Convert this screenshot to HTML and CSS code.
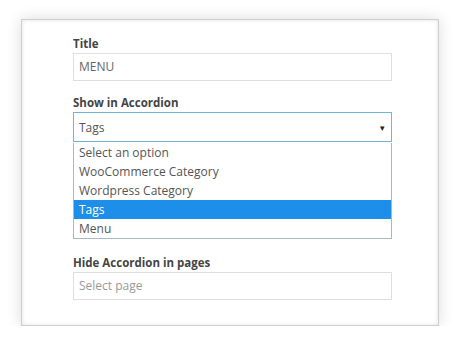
FILE: index.html
```html
<!DOCTYPE html>
<html lang="en">
<head>
    <meta charset="UTF-8">
    <title>Accordion widget</title>
    <link rel="stylesheet" href="styles.css">
</head>
<body>
    <div class="widget">
        <div class="field">
            <label class="field-label">Title</label>
            <div class="input">MENU</div>
        </div>

        <div class="field field-open">
            <label class="field-label">Show in Accordion</label>
            <div class="select">
                <span>Tags</span>
                <span class="arrow">&#9662;</span>
            </div>
            <ul class="options">
                <li>Select an option</li>
                <li>WooCommerce Category</li>
                <li>Wordpress Category</li>
                <li class="active">Tags</li>
                <li>Menu</li>
            </ul>
        </div>

        <div class="field">
            <label class="field-label">Hide Accordion in pages</label>
            <div class="input placeholder">Select page</div>
        </div>
    </div>
</body>
</html>
```

FILE: styles.css
```css
body {
    margin: 0;
    padding: 19px 19px 0 21px;
    background-color: #fff;
    font-family: "Open Sans", "Liberation Sans", sans-serif;
    color: #444;
}
.widget {
    width: 418px;
    height: 307px;
    box-sizing: border-box;
    border: 1px solid #cfcfcf;
    background-color: #fff;
    box-shadow: 0 0 14px rgba(0, 0, 0, 0.14), inset 0 0 4px rgba(0, 0, 0, 0.12);
    padding: 16px 46px 0 51px;
}
.field {
    margin-bottom: 14px;
}
.field-open {
    margin-bottom: 16px;
}
.field-label {
    display: block;
    font-size: 11.5px;
    font-weight: bold;
    color: #444;
    line-height: 16px;
    margin-bottom: 1px;
}
.input {
    height: 28px;
    box-sizing: border-box;
    border: 1px solid #dedede;
    padding: 0 5px;
    font-size: 12px;
    line-height: 26px;
    color: #666;
}
.input.placeholder {
    color: #9a9a9a;
}
.select {
    height: 30px;
    box-sizing: border-box;
    border: 1px solid #6fb6d9;
    padding: 0 6px 0 5px;
    display: flex;
    justify-content: space-between;
    align-items: center;
    font-size: 12px;
    color: #555;
}
.arrow {
    font-size: 9px;
    color: #222;
}
.options {
    list-style: none;
    margin: 0;
    padding: 0;
    border: 1px solid #a9b8c6;
    border-top: none;
    font-size: 12px;
    color: #555;
}
.options li {
    height: 19px;
    line-height: 19px;
    padding: 0 5px;
}
.options li:first-child {
    margin-top: 1px;
}
.options li.active {
    background-color: #1e8fe8;
    color: #fff;
}
```
